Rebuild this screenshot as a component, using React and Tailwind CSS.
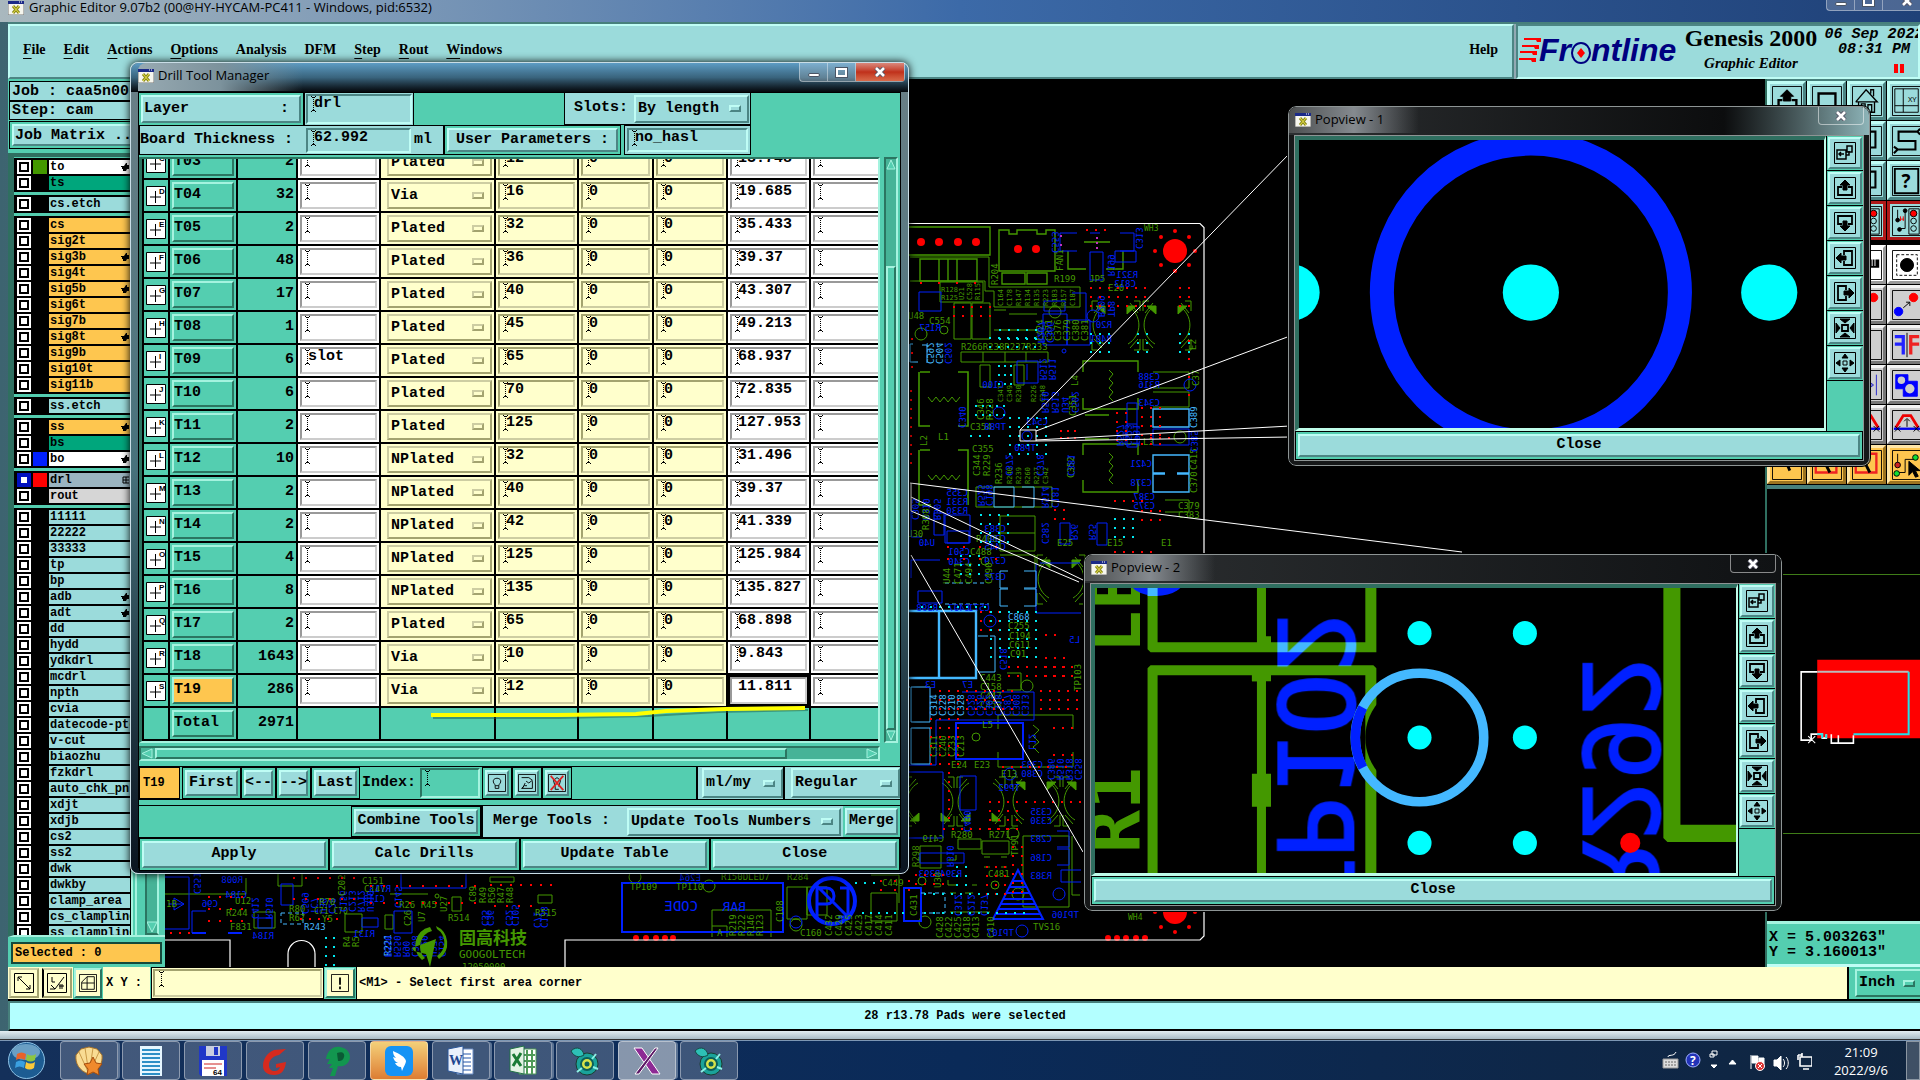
import React from 'react';
import clsx from 'clsx';

const MONO = "font-['Liberation_Mono','DejaVu_Sans_Mono',monospace] font-bold";
const SERIF = "font-['Liberation_Serif',serif] font-bold";
const UI = "font-['Open_Sans','Noto_Sans',sans-serif]";

const UP = 'border-2 border-t-[#bffdf5] border-l-[#bffdf5] border-b-[#4c8584] border-r-[#4c8584]';
const DOWN = 'border-2 border-t-[#4c8584] border-l-[#4c8584] border-b-[#bffdf5] border-r-[#bffdf5]';
const UP_GREEN = 'border-2 border-t-[#a5f3df] border-l-[#a5f3df] border-b-[#2b7561] border-r-[#2b7561]';
const UP_YELLOW = 'border-2 border-t-[#cdcda2] border-l-[#cdcda2] border-b-[#a3a36f] border-r-[#a3a36f]';

const TOOLS = [
  ['T03', 2, '', 'Plated', '12', '13.748', 'C'],
  ['T04', 32, '', 'Via', '16', '19.685', 'D'],
  ['T05', 2, '', 'Plated', '32', '35.433', 'E'],
  ['T06', 48, '', 'Plated', '36', '39.37', 'F'],
  ['T07', 17, '', 'Plated', '40', '43.307', 'G'],
  ['T08', 1, '', 'Plated', '45', '49.213', 'H'],
  ['T09', 6, 'slot', 'Plated', '65', '68.937', 'I'],
  ['T10', 6, '', 'Plated', '70', '72.835', 'J'],
  ['T11', 2, '', 'Plated', '125', '127.953', 'K'],
  ['T12', 10, '', 'NPlated', '32', '31.496', 'L'],
  ['T13', 2, '', 'NPlated', '40', '39.37', 'M'],
  ['T14', 2, '', 'NPlated', '42', '41.339', 'N'],
  ['T15', 4, '', 'NPlated', '125', '125.984', 'O'],
  ['T16', 8, '', 'NPlated', '135', '135.827', 'P'],
  ['T17', 2, '', 'Plated', '65', '68.898', 'Q'],
  ['T18', 1643, '', 'Via', '10', '9.843', 'R'],
  ['T19', 286, '', 'Via', '12', '11.811', 'S'],
];

const CYAN = 'bg-[#9bdbdb]';
const GOLD = 'bg-[#fec64f]';

const LAYER_GROUPS = [
  [
    { name: 'to', bg: 'bg-white', swatch: 'bg-[#449800]', hand: true },
    { name: 'ts', bg: 'bg-[#00a67c]' },
  ],
  [{ name: 'cs.etch', bg: CYAN }],
  [
    { name: 'cs', bg: GOLD },
    { name: 'sig2t', bg: GOLD },
    { name: 'sig3b', bg: GOLD, hand: true },
    { name: 'sig4t', bg: GOLD },
    { name: 'sig5b', bg: GOLD, hand: true },
    { name: 'sig6t', bg: GOLD },
    { name: 'sig7b', bg: GOLD },
    { name: 'sig8t', bg: GOLD, hand: true },
    { name: 'sig9b', bg: GOLD },
    { name: 'sig10t', bg: GOLD },
    { name: 'sig11b', bg: GOLD },
  ],
  [{ name: 'ss.etch', bg: CYAN }],
  [
    { name: 'ss', bg: GOLD, hand: true },
    { name: 'bs', bg: 'bg-[#00a67c]' },
    { name: 'bo', bg: 'bg-white', swatch: 'bg-[#0020ff]', hand: true },
  ],
  [
    { name: 'drl', bg: 'bg-[#9bb4c0]', swatch: 'bg-[#ff0000]', active: true },
    { name: 'rout', bg: 'bg-[#d6d6d6]' },
  ],
  [
    '11111', '22222', '33333', 'tp', 'bp', 'adb', 'adt', 'dd', 'hydd', 'ydkdrl', 'mcdrl', 'npth', 'cvia',
    'datecode-ptc', 'v-cut', 'biaozhu', 'fzkdrl', 'auto_chk_pnl', 'xdjt', 'xdjb', 'cs2', 'ss2', 'dwk',
    'dwkby', 'clamp_area', 'cs_clampline', 'ss_clampline',
  ].map((name) => ({ name, bg: CYAN, hand: name === 'adb' || name === 'adt' })),
];

// ---------------------------------------------------------------- small parts

const Caret = () => (
  <svg width="5" height="16" viewBox="0 0 5 16" className="-mr-[2px] shrink-0" stroke="#000" fill="none" shapeRendering="crispEdges">
    <path d="M2.5 1v14" strokeDasharray="1 1" />
    <path d="M0 .5h1M4 .5h1M1 1.5h3M0 15.5h1M4 15.5h1M1 14.5h3" />
  </svg>
);

const XIcon = () => (
  <svg width="16" height="14" viewBox="0 0 16 14" className="shrink-0">
    <path d="M0 0h16v14H0z" fill="#f6f6ee" stroke="#777" />
    <path d="M0 0h16v3H0z" fill="#1b2a88" />
    <path d="M11 1h1M13 1h1" stroke="#fff" />
    <path d="M5 5l6 7M11 5l-6 7" stroke="#8c8b1c" strokeWidth="3" />
    <path d="M5 5l6 7M11 5l-6 7" stroke="#e6e04a" />
  </svg>
);

const Knob = ({ yellow, green }) => (
  <span
    className={clsx(
      'pointer-events-none mr-[6px] h-[7px] w-3 shrink-0 self-center',
      yellow && UP_YELLOW,
      green && UP_GREEN,
      !yellow && !green && UP
    )}
  />
);

const Drop = ({ label, value, options, tone = UP, bg = CYAN, yellow, green, className }) => (
  <span className={clsx('flex items-center', tone, bg, className)}>
    <select
      aria-label={label}
      defaultValue={value}
      className={clsx(MONO, 'w-full min-w-0 appearance-none bg-transparent pl-[2px] text-[15px] leading-5 outline-none')}
    >
      {options.map((o) => (
        <option key={o}>{o}</option>
      ))}
    </select>
    <Knob yellow={yellow} green={green} />
  </span>
);

const Field = ({ label, value, tone = DOWN, className, caret = true }) => (
  <span className={clsx('flex min-w-0 items-start pl-[3px]', tone, className)}>
    {caret ? <Caret /> : <span className="w-[3px] shrink-0" />}
    <input
      aria-label={label}
      defaultValue={value}
      className={clsx(MONO, 'h-4 w-full min-w-0 bg-transparent text-[15px] leading-4 outline-none')}
    />
  </span>
);

const Key = ({ children, className, label }) => (
  <span className={clsx('flex border border-black bg-[#54ceb0] p-[2px]', className)}>
    <button type="button" aria-label={label} className={clsx(MONO, UP, CYAN, 'flex w-full items-center justify-center whitespace-nowrap text-[15px]')}>
      {children}
    </button>
  </span>
);

const CloseX = ({ className }) => (
  <button type="button" aria-label="Close window" className={clsx('flex items-center justify-center', className)}>
    <svg width="12" height="10" viewBox="0 0 12 10">
      <path d="M2 1l8 8M10 1l-8 8" stroke="#556" strokeWidth="4.5" />
      <path d="M2 1l8 8M10 1l-8 8" stroke="#fff" strokeWidth="2.6" />
    </svg>
  </button>
);

const WindowButtons = ({ red, className }) => (
  <div className={clsx('flex h-[19px] rounded-b border border-t-0 border-white/50', className)}>
    <button type="button" aria-label="Minimize" className="flex w-7 items-end justify-center border-r border-white/40 bg-white/20 pb-1">
      <span className="h-1 w-3 rounded-sm border border-gray-600 bg-white" />
    </button>
    <button type="button" aria-label="Maximize" className="flex w-7 items-center justify-center border-r border-white/40 bg-white/20">
      <span className="flex h-[9px] w-[11px] border-2 border-white outline outline-gray-600" />
    </button>
    <CloseX className={clsx('w-12', red ? 'bg-linear-to-b from-[#d9877b] via-[#c0301a] to-[#d86a4a]' : 'bg-white/20')} />
  </div>
);

// ---------------------------------------------------------------- header

const MENU = [
  ['F', 'ile'], ['E', 'dit'], ['A', 'ctions'], ['O', 'ptions'], ['', 'Analysis'], ['', 'DFM'], ['S', 'tep'], ['R', 'out'], ['W', 'indows'],
];

const Header = () => (
  <header className="flex h-[57px] shrink-0 border-t-2 border-[#47807c]">
    <nav className={clsx(SERIF, UP, CYAN, 'flex min-w-0 flex-1 items-center gap-[18px] pb-1 pl-[13px] text-sm')}>
      {MENU.map(([u, rest]) => (
        <a key={rest} href="#" className="leading-5">
          <span className="underline underline-offset-4">{u}</span>
          {rest}
        </a>
      ))}
      <a href="#" className="ml-auto pr-[14px] leading-5">Help</a>
    </nav>
    <div className={clsx(CYAN, DOWN, 'ml-[2px] flex w-[404px] shrink-0 overflow-hidden')}>
      <FrontlineLogo />
      <div className={clsx(SERIF, 'w-[138px] shrink-0 text-center')}>
        <p className="text-2xl leading-6 whitespace-nowrap">Genesis 2000</p>
        <p className="pt-[3px] text-[15px] leading-5 italic">Graphic Editor</p>
      </div>
      <div className={clsx(MONO, 'w-[108px] shrink-0 pt-px text-center text-[15px] leading-[15px] whitespace-nowrap italic')}>
        <p>06 Sep 2022</p>
        <p>08:31 PM</p>
        <p className="mt-[7px] flex justify-end gap-[2px] pr-[24px]">
          <span className="h-[9px] w-1 bg-[#f00]" />
          <span className="h-[9px] w-1 bg-[#f00]" />
        </p>
      </div>
    </div>
  </header>
);

const FrontlineLogo = () => (
  <svg width="164" height="52" viewBox="0 0 164 52" className="shrink-0">
    <g fill="#f00">
      <path d="M6 12h17v4h-4l-1-2H6zM4 19h17v4h-4l-1-2H4zM2 25h17v4h-4l-1-2H2zM1 32h17v4h-4l-1-2H1z" />
    </g>
    <g className="font-['Liberation_Sans',sans-serif]" fontSize="32" fontWeight="bold" fontStyle="italic" fill="#000080">
      <text x="21" y="35">Fr</text>
      <text x="73" y="35">ntline</text>
    </g>
    <ellipse cx="63" cy="27" rx="9" ry="10" fill="none" stroke="#000080" strokeWidth="2" />
    <path d="M63 22l4 5-4 5-4-5z" fill="#f00" />
  </svg>
);

// ---------------------------------------------------------------- sidebar

const RowMark = ({ hand }) => (
  <svg width="8" height="8" viewBox="0 0 8 8" className="absolute top-1 left-[106px]">
    {hand ? <path d="M0 3h3l2-3h1v2h2v4H6L5 8H2V6H1V4H0z" fill="#000" /> : <path d="M2 1h7v6H2zM2 4h7M5 1v6" fill="none" stroke="#000" />}
  </svg>
);

const LayerRow = ({ layer }) => (
  <label className="relative flex h-4 items-center">
    <span className={clsx('ml-[2px] flex h-[14px] w-[14px] items-center justify-center', layer.active ? 'bg-[#0010c0]' : 'bg-white')}>
      <input
        type="checkbox"
        defaultChecked={layer.active}
        className={clsx('h-[10px] w-[10px] appearance-none border-2 bg-white', layer.active ? 'border-[#0010c0]' : 'border-black')}
      />
    </span>
    <span className={clsx('ml-[2px] h-[14px] w-[14px]', layer.swatch || 'bg-black')} />
    <span className={clsx(MONO, layer.bg, 'ml-[2px] h-[14px] min-w-0 flex-1 overflow-hidden pl-px text-xs leading-[14px] whitespace-nowrap')}>
      {layer.name}
    </span>
    {(layer.hand || layer.active) && <RowMark hand={layer.hand} />}
  </label>
);

const Sidebar = () => (
  <aside className={clsx(MONO, 'flex w-[157px] shrink-0 flex-col bg-[#54ceb0] pt-[2px]')}>
    <p className={clsx(CYAN, 'ml-px h-5 overflow-hidden border border-black pl-[2px] text-[15px] leading-[19px] whitespace-nowrap')}>Job : caa5n00</p>
    <p className={clsx(CYAN, 'ml-px h-[19px] border border-black pl-[2px] text-[15px] leading-[18px]')}>Step: cam</p>
    <div className="mt-px ml-px flex h-7 border border-black p-[2px]">
      <button type="button" className={clsx(UP, CYAN, 'flex-1 pl-px text-left text-[15px] leading-5')}>Job Matrix ...</button>
    </div>
    <div className="mt-1 flex min-h-0 flex-1 border-t-4 border-l-[6px] border-b-2 border-t-[#2f6f60] border-l-[#2f6f60] border-b-[#a5f3df]">
      <div className="flex w-[117px] flex-col gap-[5px] overflow-hidden pt-[2px] pl-px">
        {LAYER_GROUPS.map((group, i) => (
          <div key={i} className="bg-black pr-px outline outline-black">
            {group.map((layer) => (
              <LayerRow key={layer.name} layer={layer} />
            ))}
          </div>
        ))}
      </div>
      <div className="w-[6px] border-x-2 border-x-[#a5f3df] bg-[#54ceb0]" />
      <div className="ml-2 flex w-[14px] flex-col justify-end border-2 border-[#2b7561] border-r-[#a5f3df] bg-[#46b397]">
        <svg width="10" height="12" viewBox="0 0 10 12">
          <path d="M0 1h10L5 11z" fill="#54ceb0" stroke="#a5f3df" />
        </svg>
      </div>
    </div>
    <p className="mx-[3px] mt-[5px] mb-[3px] h-[22px] border-2 border-[#14483a] bg-[#fec64f] pl-[2px] text-xs leading-[18px]">Selected : 0</p>
  </aside>
);

// ---------------------------------------------------------------- board drawing

const G = '#449800';
const B = '#0020ff';
const L = '#44b8ff';
const R = '#f00';
const C = '#00e8f0';

const Tx = ({ x, y, t, c = G, m = 'h', s = 9 }) => {
  const matrix = {
    h: `translate(${x} ${y})`,
    v: `translate(${x} ${y}) rotate(-90)`,
    mh: `matrix(-1 0 0 1 ${x} ${y})`,
    mv: `matrix(0 -1 -1 0 ${x} ${y})`,
  }[m];
  return (
    <text transform={matrix} fill={c} fontSize={s}>
      {t}
    </text>
  );
};

const Dots = ({ x, y, nx = 1, ny = 1, dx = 9, dy = 9, c = R }) => (
  <path
    d={Array.from({ length: nx * ny }, (_, i) => `M${x + (i % nx) * dx} ${y + Math.floor(i / nx) * dy}h2v2h-2z`).join('')}
    fill={c}
  />
);

// a run of upright references, evenly spaced from left to right
const Run = ({ x, y, list, dx = 9, c = G, m = 'v', s = 9 }) =>
  list.split(' ').map((t, i) => <Tx key={i} x={x + i * dx} y={y} t={t} c={c} m={m} s={s} />);

const BigCap = ({ x, y, flip }) => (
  <g transform={flip ? `matrix(1 0 0 -1 ${x} ${y + 49})` : `translate(${x} ${y})`} stroke={G} fill="none">
    <path d="M6 0H0v10M42 0h6v10M0 38v11h6M48 38v11h-6M2 12l8-10M38 2l8 10M10 47l-8-9M46 38l-8 9" />
    <path d="M12 5a22 22 0 0 0 0 38M36 5a22 22 0 0 1 0 38" />
    <path d="M4 5h9v8zM44 5h-9v8z" fill={G} />
  </g>
);

const BoardCanvas = () => (
  <svg
    viewBox="165 79 1600 888"
    preserveAspectRatio="xMinYMin slice"
    className="h-full min-w-0 flex-1 bg-black font-['DejaVu_Sans_Mono',monospace]"
  >
    {/* green silkscreen */}
    <g fill="none" stroke={G}>
      <path d="M900 227h90v28h-90M999 230h10v4h8v-4h20v4h9v-4h9v41h-56zM920 259h57v22h-57zM939 259v22M948 259v22M957 259v22M1002 273h23v11h-23zM1027 273h20v11h-20z" strokeWidth="1.4" />
      <path d="M910 257h79v30h91v20h-86v-16h-9v-10h-75M940 282h43v20h-43zM954 303h17v36h-17zM972 303h18v36h-18zM994 310h12M1009 314h28M994 330h44" />
      <path d="M961 352h87v10h-87zM983 352v10M1005 352v10M1026 352v10M980 365h10v22h-10zM1014 365h10v20h-10z" />
      <path d="M920 372h10M958 372h10v54h-10M930 426h-11v-54M920 450h10M958 450h10v55M919 450v55h12" strokeWidth="1.6" />
      <path d="M928 397l4 5 4-5 4 5 4-5 4 5 4-5 4 5 4-5M928 475l4 5 4-5 4 5 4-5 4 5 4-5 4 5 4-5" />
      <path d="M1083 372v-11h55v11M1083 398v11h55v-11M1083 455v-11h55v11M1083 480v12h55v-12M1085 415h24M1085 439h24" strokeWidth="1.4" />
      <path d="M1109 370l4 4-4 5 4 4-4 5 4 4-4 5 4 4M1109 453l4 4-4 5 4 4-4 5 4 4-4 5 4 4" />
      <path d="M1153 372h36v16h-36M1153 392h36v15h-36M1165 500h24v12h-24M976 487h76v20h-76zM1000 516h35v35h-35zM1000 533h35M1000 555h35v16" />
      <path d="M1068 251v18h18M1106 269h17v-18M1084 242h26" strokeWidth="1.4" />
      <circle cx="921" cy="334" r="6" /><circle cx="944" cy="330" r="4" /><circle cx="1055" cy="312" r="6" /><circle cx="1180" cy="437" r="6" /><circle cx="985" cy="561" r="4" />
      <circle cx="1027" cy="686" r="6" /><circle cx="976" cy="737" r="4" /><circle cx="1013" cy="834" r="6" /><circle cx="922" cy="881" r="4" /><circle cx="995" cy="885" r="4" /><circle cx="925" cy="922" r="6" /><circle cx="1018" cy="894" r="6" />
      <path d="M998 729v-14h75v14M998 752v15h75v-15M1033 725l6 5-6 6 6 6-6 5 6 6M958 839h23v10h-23zM982 841h27v13h-27zM1023 836h46v71h-46zM1072 836v59h8M920 846h21v22h-21zM1007 673h14v17h-14" />
      <path d="M984 857h6M1001 857h6M984 867h6M1001 867h6M948 860h8v-5M948 880v5h8M977 885h-5M950 893h6M965 893h8M950 912h40" />
      <path d="M712 937v-27h59v27M712 926h15v11M787 887h20v32h-20zM807 887h20v28h-20zM871 893h26v28h-26zM871 875h28v28M538 895h14v8h-14zM162 894h84v-16" />
      <path d="M254 912h21v16h-21zM278 872h24v14h-24zM345 914h17v18h-17zM452 897h9v14h-9zM385 915h8v14h-8zM390 894h38M490 877h24v5h-24z" />
      <circle cx="635" cy="877" r="6" /><circle cx="709" cy="886" r="6" /><circle cx="796" cy="925" r="6" /><circle cx="437" cy="896" r="2" />
    </g>
    <BigCap x={1092} y={301} />
    <BigCap x={1143} y={301} />
    <BigCap x={906} y={777} flip />
    <BigCap x={957} y={777} flip />
    <BigCap x={1012} y={777} />
    <BigCap x={1063} y={777} />
    <BigCap x={1037} y={555} />

    {/* blue silkscreen */}
    <g fill="none" stroke={B}>
      <path d="M1060 233h17M1090 233h10M1120 233h14v18h-14M1077 251h-17v-18M1090 252h13v28h-13zM1115 251h21v11h-21zM919 292h22v19h-22zM1043 314h24v31h-24zM1044 301h21v10h-21zM1067 320h23v25h-23zM1072 293h14v30" />
      <path d="M1017 361h21v22h-21zM1027 364v16M1127 403h10v44h-10zM1127 424h10M1153 429h36v16h-36zM1060 523h10v21h-10zM1097 523h10v22h-10zM934 513h10v22h-10zM945 515h25v28h-25zM947 531h22v12h-22z" />
      <path d="M911 511v26h11M918 591h24v12h-24zM940 560h-29v18M1036 563v50h45M1040 563h40M962 692h72v28h-98v45h-34M960 776h16v34h-16zM903 772h40v66h-44M920 853h44v10h-44zM1057 831h12v16h-12M1057 849h12v16h-12M1081 870h-20v12h20" />
      <path d="M956 723h67v36h-67zM904 888h17v33h-17zM622 883h161v49H622z" strokeWidth="2" />
      <circle cx="1093" cy="316" r="6" /><circle cx="999" cy="413" r="6" /><circle cx="990" cy="621" r="6" /><circle cx="1010" cy="774" r="6" /><circle cx="1059" cy="894" r="6" /><circle cx="1022" cy="931" r="6" /><circle cx="1190" cy="385" r="6" /><circle cx="1027" cy="436" r="5" /><circle cx="1064" cy="351" r="2" /><circle cx="796" cy="922" r="6" />
      <path d="M165 877h24v52h-24M192 911v22h13M206 911h-14M281 884h12v21h-12zM401 872h65v16h-65zM362 918h16v9h-16zM394 911h18v22h-18zM258 918h14v10h-14zM174 898l10 6-10 6zM168 904h16" />
      <path d="M192 933h14M228 933h14" strokeWidth="2" />
      <circle cx="832" cy="901" r="23" strokeWidth="4" />
      <path d="M816 885l34 34M817 919v-31h10a7 8 0 0 1 0 16h-9M850 888h-10M838 917h10v-30" strokeWidth="3" />
      <path d="M1018 870l-25 49h50zM1013 881h10M1010 887h16M1007 893h22M1004 899h28M1001 904h34M998 909h40M995 914h46" strokeWidth="2" />
    </g>

    {/* overlap of both sides */}
    <g fill="none" stroke={L}>
      <path d="M1165 409h-12v18h12M1177 409h12v18h-12M1165 455h-12v18h12M1177 455h12v18h-12M1165 474h-12v18h12M1177 474h12v18h-12M1165 409h12M1165 427h12M1165 455h12M1165 492h12" strokeWidth="1.4" />
      <path d="M994 487h20v20h-20zM1022 487h12v20h-12M1008 571h-8v17h8M1024 571h12v17h-12M1008 589h-8v17h8M1024 589h12v17h-12M913 344h-3v18h8M922 345h5v18M910 687h-2M911 687h19v35h-19zM911 728h19v36h-19zM990 636h5v36h-17M978 636h10" />
      <path d="M900 611h76v67h-76M939 611v67" strokeWidth="2.4" />
      <path d="M921 893h24v20h-24M945 583h40M945 604h44M281 913h22v11h-22z" strokeDasharray="4 3" />
    </g>

    {/* reference labels */}
    <Tx x="1144" y="231" t="WH3" s={8} />
    <Tx x="1054" y="282" t="R199" />
    <Tx x="1089" y="282" t="JP5" />
    <Tx x="1108" y="291" t="E20" />
    <Tx x="998" y="285" t="R204" m="v" />
    <Tx x="1063" y="271" t="FAN1" m="v" />
    <Run x={941} y={292} dx={0} list="R128" m="h" s={7} />
    <Run x={941} y={300} dx={0} list="R125" m="h" s={7} />
    <Run x={964} y={300} dx={8} list="U21 C528 R115" s={7} />
    <Run x={1003} y={306} list="C164 C178 R147 R134 R135 R223 R183 R157 C187" s={7} />
    <Run x={1043} y={341} list="C424 C371 C376 C379 C380 C381" />
    <Run x={1038} y={343} dx={9} list="R207 C366" c={B} m="mv" />
    <Tx x="908" y="319" t="U48" />
    <Tx x="929" y="324" t="C554" />
    <Tx x="941" y="331" t="R157" c={B} m="mh" />
    <Run x={927} y={364} dx={9} list="C592 C504" c={L} m="mv" />
    <Tx x="945" y="364" t="C502" c={B} m="mv" />
    <Tx x="961" y="350" t="R266R238R237R233" />
    <Run x={984} y={420} dx={9} list="C346 R228" />
    <Run x={1003} y={402} dx={9} list="C347 C349 R230" s={7} />
    <Run x={1036} y={402} dx={9} list="R226 C348" s={7} />
    <Run x={1040} y={380} dx={9} list="R512 R511" c={B} m="mv" />
    <Run x={1042} y={413} dx={10} list="R510 R513 U34 C502" c={B} m="mv" />
    <Tx x="1078" y="386" t="L4" m="v" />
    <Tx x="1076" y="416" t="C351" m="v" />
    <Tx x="1074" y="478" t="C352" m="v" />
    <Tx x="1196" y="350" t="E2" m="v" />
    <Tx x="1199" y="386" t="C37" m="v" />
    <Tx x="1160" y="380" t="C388" c={B} m="mh" />
    <Tx x="1160" y="388" t="R316" c={B} m="mh" />
    <Tx x="1160" y="406" t="C343" c={B} m="mh" />
    <Tx x="1197" y="428" t="C389" c={L} m="v" />
    <Tx x="1197" y="470" t="C415" m="v" />
    <Tx x="1197" y="493" t="C370" m="v" />
    <Tx x="1191" y="452" t="C385" c={B} m="mv" />
    <Tx x="1143" y="445" t="L3" />
    <Tx x="1152" y="467" t="C421" c={B} m="mh" />
    <Tx x="1152" y="486" t="C378" c={B} m="mh" />
    <Tx x="1155" y="500" t="C387" c={B} m="mh" />
    <Tx x="1155" y="509" t="C375" c={B} m="mh" />
    <Tx x="1178" y="509" t="C379" />
    <Tx x="1178" y="518" t="C383" />
    <Tx x="1138" y="278" t="R321" c={B} m="mh" />
    <Tx x="1136" y="287" t="C813" c={B} m="mh" />
    <Tx x="1136" y="249" t="C313" c={B} m="mv" />
    <Tx x="1108" y="276" t="R199" c={B} m="mv" />
    <Tx x="1112" y="328" t="R20" c={B} m="mh" />
    <Tx x="1112" y="342" t="R401" c={B} m="mh" />
    <Run x={1098} y={317} dx={10} list="R209 TP8" c={B} m="mv" />
    <Tx x="1052" y="253" t="C553" c={B} m="mv" />
    <Run x={1117} y={446} dx={8} list="R527 C523 TP31" c={B} m="mv" />
    <Tx x="1004" y="388" t="C100" c={B} m="mh" />
    <Tx x="959" y="428" t="C340" c={B} m="mv" />
    <Tx x="970" y="430" t="C354" />
    <Tx x="1006" y="430" t="TP88" c={B} m="mh" />
    <Tx x="1036" y="451" t="TP80" c={B} m="mh" />
    <Tx x="1048" y="425" t="C543" c={B} m="mh" />
    <Tx x="938" y="440" t="L1" />
    <Tx x="927" y="446" t="L2" m="v" />
    <Tx x="972" y="452" t="C355" />
    <Run x={980} y={476} dx={10} list="C344 R229" />
    <Tx x="1002" y="484" t="R236" m="v" />
    <Run x={1012} y={484} list="R240 R239 R260 R227 C342" s={7} />
    <Run x={1006} y={476} dx={31} list="C372 C378 C381" c={B} m="mv" />
    <Run x={978} y={506} dx={8} list="R525 C198" c={B} m="mv" />
    <Run x={1042} y={508} dx={10} list="R514 C181" c={B} m="mv" />
    <Run x={912} y={520} dx={11} list="C305 R310 R305" c={B} m="mv" />
    <Tx x="968" y="496" t="C355" c={B} m="mh" />
    <Tx x="968" y="505" t="R331" c={B} m="mh" />
    <Tx x="968" y="514" t="R330" c={B} m="mh" />
    <Tx x="929" y="530" t="R308" m="v" />
    <Tx x="907" y="537" t="U30" />
    <Tx x="935" y="546" t="U40" c={B} m="mh" />
    <Tx x="976" y="542" t="R408" />
    <Tx x="1006" y="532" t="C383" c={B} m="mh" />
    <Tx x="1006" y="542" t="C391" c={B} m="mh" />
    <Tx x="1006" y="550" t="C445" c={B} m="mh" />
    <Tx x="1006" y="564" t="C379" c={B} m="mh" />
    <Tx x="1006" y="580" t="C372" c={B} m="mh" />
    <Tx x="970" y="555" t="C488" />
    <Tx x="970" y="565" t="C340" c={B} m="mh" />
    <Tx x="970" y="555" t="C501" c={B} m="mh" />
    <Tx x="1042" y="544" t="C582" c={B} m="mv" />
    <Run x={1071} y={540} dx={18} list="R26 R55" c={B} m="mv" />
    <Tx x="1057" y="546" t="E25" />
    <Tx x="1107" y="546" t="E15" />
    <Tx x="1161" y="546" t="E1" />
    <Run x={950} y={584} dx={11} list="U44 C471 C494" />
    <Tx x="992" y="584" t="C490" m="v" />
    <Tx x="990" y="611" t="C571" c={B} m="mh" />
    <Tx x="938" y="611" t="R398" c={B} m="mh" />
    <Tx x="970" y="611" t="C407" c={B} m="mh" />
    <Tx x="1008" y="620" t="C868" c={L} />
    <Tx x="1008" y="629" t="C255" />
    <Tx x="1009" y="639" t="C194" />
    <Tx x="1009" y="648" t="C611" />
    <Tx x="1010" y="657" t="C91" />
    <Tx x="1000" y="670" t="C518" c={B} m="mv" />
    <Tx x="980" y="681" t="C443" />
    <Tx x="980" y="690" t="C158" />
    <Tx x="980" y="699" t="C447" />
    <Tx x="980" y="708" t="C453" />
    <Tx x="936" y="688" t="E3" c={B} m="mh" />
    <Tx x="973" y="688" t="E7" c={B} m="mh" />
    <Run x={937} y={716} list="C314 C228 C210 C328" c={L} />
    <Run x={968} y={716} list="C528 C326 C302 C318 C287 C308 C313" c={B} m="mv" />
    <Run x={937} y={757} list="C311 C240 C233 C213" />
    <Tx x="982" y="728" t="L5" />
    <Tx x="1029" y="750" t="L12" c={B} m="mv" />
    <Tx x="951" y="768" t="E24" />
    <Tx x="974" y="768" t="E23" />
    <Tx x="1001" y="777" t="E13" />
    <Tx x="1043" y="768" t="C383" c={B} m="mh" />
    <Tx x="1043" y="777" t="C380" c={B} m="mh" />
    <Run x={1048} y={780} list="C386 R510 R318 C558" c={B} m="mv" />
    <Tx x="1020" y="791" t="TP92" c={B} m="mh" />
    <Tx x="1081" y="691" t="TP103" m="v" />
    <Tx x="1080" y="643" t="L5" c={B} m="mh" />
    <Tx x="1052" y="815" t="C335" c={B} m="mh" />
    <Tx x="1052" y="824" t="C330" c={B} m="mh" />
    <Tx x="1052" y="842" t="C283" c={B} m="mh" />
    <Tx x="1052" y="861" t="C186" c={B} m="mh" />
    <Tx x="1052" y="879" t="R383" c={B} m="mh" />
    <Tx x="951" y="838" t="R280" />
    <Tx x="989" y="838" t="R271" />
    <Tx x="944" y="842" t="C419" m="mh" />
    <Tx x="919" y="867" t="R298" m="v" />
    <Tx x="947" y="867" t="R310" c={B} m="mv" />
    <Tx x="1018" y="856" t="TP91" m="v" />
    <Tx x="964" y="832" t="C430" c={B} m="mv" />
    <Tx x="962" y="877" t="R394R393" c={B} m="mh" />
    <Tx x="941" y="888" t="U30" m="v" />
    <Tx x="988" y="877" t="C481" />
    <Tx x="917" y="916" t="C431" m="v" />
    <Run x={955} y={916} dx={13} list="C312 C212 C137" c={B} m="mv" />
    <Run x={943} y={938} list="C428 C422 C425 C418 C413" />
    <Tx x="994" y="938" t="C410" m="v" />
    <Tx x="1079" y="918" t="TP106" c={B} m="mh" />
    <Tx x="1014" y="936" t="TP107" c={B} m="mh" />
    <Tx x="1033" y="930" t="TVS16" />
    <Tx x="1128" y="920" t="WH4" s={8} />
    <Tx x="630" y="890" t="TP109" />
    <Tx x="676" y="890" t="TP110" />
    <Tx x="701" y="881" t="E264" c={B} m="mh" />
    <Tx x="721" y="880" t="R150DLED7" />
    <Tx x="787" y="880" t="R284" />
    <Tx x="882" y="886" t="C449" />
    <Tx x="746" y="911" t="BAR" c={B} m="mh" s={13} />
    <Tx x="698" y="911" t="CODE" c={B} m="mh" s={14} />
    <Run x={736} y={936} list="R219 R222 R146 R123" />
    <Tx x="717" y="936" t="A" />
    <Tx x="783" y="922" t="C108" m="v" />
    <Tx x="800" y="936" t="C160" />
    <Run x={832} y={936} dx={10} list="C432 C429 C425 C423 C417 C414 C411" />
    <Run x={486} y={903} list="R49 R50 R47 R48" />
    <Run x={482} y={926} dx={5} list="C35 C36" c={B} m="mv" />
    <Run x={506} y={926} dx={6} list="C52 C105" c={B} m="mv" />
    <Run x={534} y={928} dx={7} list="C71 C138" c={B} m="mv" />
    <Tx x="535" y="916" t="R515" />
    <Tx x="226" y="916" t="R244" />
    <Tx x="235" y="904" t="U12" />
    <Tx x="230" y="930" t="F831" />
    <Tx x="218" y="907" t="C96" c={B} m="mh" />
    <Tx x="243" y="883" t="R008" c={B} m="mh" />
    <Tx x="247" y="898" t="C184" c={B} m="mh" />
    <Tx x="274" y="939" t="R184" c={B} m="mh" />
    <Tx x="194" y="894" t="C551" c={B} m="mv" />
    <Run x={252} y={919} dx={14} list="C412 R510" c={B} m="mv" />
    <Tx x="289" y="912" t="R80" />
    <Tx x="289" y="921" t="R67" />
    <Tx x="304" y="930" t="R243" c={L} />
    <Run x={302} y={914} dx={9} list="C509 TC7 U30 C28" c={B} m="mv" />
    <Tx x="319" y="905" t="R70" />
    <Tx x="314" y="914" t="C71 C70" s={8} />
    <Tx x="322" y="922" t="Y5" />
    <Run x={340} y={912} dx={9} list="C156 C213 R712 U310" c={B} m="mv" />
    <Run x={345} y={896} dx={8} list="C202" />
    <Tx x="362" y="884" t="C151" />
    <Tx x="364" y="892" t="C147" />
    <Tx x="391" y="892" t="R713" c={B} m="mh" />
    <Tx x="385" y="902" t="C113" c={B} m="mh" />
    <Tx x="375" y="937" t="R131" c={B} m="mh" />
    <Run x={350} y={947} list="R4 R5" />
    <Tx x="399" y="908" t="R26 R45" />
    <Tx x="411" y="926" t="C26" m="v" />
    <Tx x="425" y="922" t="U7" m="v" />
    <Tx x="447" y="912" t="U27" m="v" />
    <Tx x="448" y="921" t="R514" />
    <Tx x="391" y="956" t="R221" c={L} m="v" />
    <Run x={385} y={957} dx={9} list="R550 R550 R90 C308 C320 U27 C154" c={B} m="mv" />
    <Tx x="395" y="908" t="C145" c={B} m="mv" />
    <Tx x="476" y="902" t="C89" m="v" />
    <Tx x="166" y="907" t="1B" />

    {/* maker mark */}
    <path d="M430 927a19 19 0 0 0 -8 33l3-2a16 16 0 0 1 7-27zM436 926a19 19 0 0 1 3 33l-2-3a16 16 0 0 0 0-27zM412 948l24-9-6 28-4-13-12-3z" fill={G} />
    <text x="459" y="944" fontSize="17" fontWeight="bold" fill={G} fontFamily="'Noto Sans CJK SC', sans-serif">固高科技</text>
    <Tx x="459" y="958" t="GOOGOLTECH" s={11} />
    <Tx x="462" y="970" t="12050000" s={9} />

    {/* drills */}
    <g fill={R}>
      {[921, 939, 958, 976].map((x) => <circle key={x} cx={x} cy="242" r="4" />)}
      <circle cx="1018" cy="249" r="4" /><circle cx="1036" cy="249" r="4" />
      <circle cx="1175" cy="251" r="12" /><circle cx="1175" cy="912" r="12" />
      {[[1175, 231], [1161, 237], [1189, 237], [1155, 251], [1195, 251], [1161, 265], [1189, 265], [1175, 271], [1155, 912], [1195, 912], [1161, 927], [1189, 927], [1175, 932]].map(([x, y]) => (
        <circle key={`${x}-${y}`} cx={x} cy={y} r="2" />
      ))}
      {[636, 646, 656, 665, 673, 1108, 1117, 1126, 1136, 1145].map((x) => <circle key={x} cx={x} cy="938" r="3" />)}
    </g>
    <Dots x={1086} y={229} nx={3} />
    <Dots x={1090} y={287} nx={7} ny={3} />
    <Dots x={1179} y={287} nx={2} ny={3} />
    <Dots x={910} y={390} nx={1} ny={9} />
    <Dots x={911} y={338} nx={1} ny={3} dy={14} />
    <Dots x={1060} y={430} nx={3} ny={2} dx={7} dy={7} />
    <Dots x={1141} y={407} nx={3} ny={5} />
    <Dots x={1116} y={412} nx={2} ny={4} />
    <Dots x={1141} y={510} nx={3} ny={2} />
    <Dots x={1114} y={500} nx={4} />
    <Dots x={1114} y={551} nx={5} />
    <Dots x={1054} y={509} nx={2} ny={2} />
    <Dots x={980} y={611} nx={3} ny={3} />
    <Dots x={1045} y={634} nx={2} />
    <Dots x={1045} y={657} nx={3} ny={3} />
    <Dots x={1008} y={666} nx={8} ny={2} />
    <Dots x={1040} y={690} nx={5} ny={3} />
    <Dots x={939} y={690} nx={9} ny={3} />
    <Dots x={930} y={718} nx={4} ny={6} />
    <Dots x={1053} y={727} nx={3} ny={2} dy={27} />
    <Dots x={948} y={772} nx={1} ny={6} />
    <Dots x={1002} y={766} nx={8} />
    <Dots x={989} y={801} nx={11} />
    <Dots x={989} y={810} nx={4} ny={3} />
    <Dots x={943} y={828} nx={8} />
    <Dots x={1012} y={846} nx={2} ny={6} />
    <Dots x={915} y={874} nx={4} ny={2} />
    <Dots x={986} y={866} nx={3} ny={4} />
    <Dots x={920} y={282} nx={4} dx={18} />
    <Dots x={953} y={306} nx={5} ny={2} />
    <Dots x={1150} y={437} nx={3} />
    <Dots x={1188} y={340} nx={1} ny={4} dy={18} />
    <Dots x={947} y={546} nx={4} ny={2} dx={16} dy={12} />
    <Dots x={170} y={932} nx={3} />
    <Dots x={208} y={896} nx={4} ny={3} dx={11} dy={12} />
    <Dots x={293} y={877} nx={6} ny={2} dx={12} dy={21} />
    <Dots x={370} y={885} nx={9} ny={2} dx={13} dy={17} />
    <Dots x={300} y={918} nx={5} dx={9} />
    <Dots x={490} y={884} nx={7} dx={10} />
    <Dots x={494} y={905} nx={4} dx={12} dy={9} />
    <Dots x={880} y={880} nx={3} ny={2} dx={14} />
    <g>
      <Dots x={999} y={329} nx={5} ny={2} c={C} />
      <Dots x={989} y={337} nx={6} ny={2} c={C} />
      <Dots x={1090} y={333} nx={3} ny={3} c={C} dy={9} />
      <Dots x={1137} y={333} nx={2} ny={3} c={C} />
      <Dots x={1179} y={333} nx={2} ny={3} c={C} />
      <Dots x={1009} y={417} nx={5} ny={5} c={C} />
      <Dots x={970} y={435} nx={3} c={C} />
      <Dots x={975} y={405} nx={5} ny={2} c={C} dx={7} />
      <Dots x={998} y={365} nx={3} ny={3} c={C} dx={6} />
      <Dots x={1114} y={518} nx={3} ny={3} c={C} />
      <Dots x={980} y={514} nx={4} ny={4} c={C} />
      <Dots x={1008} y={611} nx={4} ny={6} c={C} />
      <Dots x={990} y={611} nx={2} ny={6} c={C} />
      <Dots x={921} y={606} nx={8} c={C} />
      <Dots x={960} y={555} nx={3} ny={3} c={C} />
      <Dots x={924} y={893} nx={9} c={C} />
      <Dots x={924} y={912} nx={12} c={C} />
      <Dots x={862} y={912} nx={6} c={C} dx={8} />
      <Dots x={956} y={866} nx={2} ny={3} c={C} />
      <Dots x={325} y={937} nx={2} ny={4} c={C} dx={8} />
      <Dots x={855} y={882} nx={3} c={C} dx={9} />
      <Dots x={1096} y={237} ny={3} c="#c030c0" dy={5} />
      <Dots x={1060} y={235} ny={2} c="#c030c0" />
    </g>

    {/* outline and zoom rays */}
    <path d="M900 223.500H1200l4 4V936l-4 4H565v30M165 940h65v30M288 970v-16a13.500 13.500 0 0 1 27 0v16" fill="none" stroke="#fff" strokeWidth="1.200" />
    <path d="M1020 430h16v11h-16zM1020 430L1290 153M1036 431L1290 336M1036 440L1290 426M1036 441L1290 437M910 483L1462 552M911 497L1083 580M911 511L1079 582M911 555L1083 852M911 483v28" fill="none" stroke="#fff" />
  </svg>
);

// ---------------------------------------------------------------- right column

const ToolIcon = ({ kind }) => {
  const art = {
    up: <><path d="M11 15H7v17M21 15h5v17" strokeWidth="2.500" /><path d="M16 4l7 7h-3v5h-8v-5H9z" fill="#000" /></>,
    down: <><path d="M7 23V8h18v15" strokeWidth="2.500" /><path d="M11 21h9l-4 6z" fill="#000" /></>,
    home: <path d="M4 17L15 4l12 13H4M7 17v11h17V17M20 8V4h3v7M10 19h4v4h-4zM17 28v-8h4v8" strokeWidth="1.400" />,
    xy: <><path d="M3 3h25v25H3zM12 3v25M3 21h25" /><text x="17" y="17" fontSize="8" fill="#000" stroke="none">XY</text></>,
    snake: <path d="M27 6H7v10h18v9H6M27 6l3-3M27 6l3 3M6 25l-4-3M6 25l-4 4" strokeWidth="2.200" />,
    screen: <path d="M3 6h22v17H3zM8 23v4h12" strokeWidth="2.200" />,
    help: <><path d="M3 3h25v26H3z" strokeWidth="2" /><text x="10" y="23" fontSize="20" fontWeight="bold" fill="#000" stroke="none">?</text></>,
    lights: (
      <>
        <path d="M18 3h11v27H18zM14 6v18H8M6 4v12" />
        <circle cx="23" cy="8" r="3.500" fill="#f00" /><circle cx="23" cy="16" r="3" /><circle cx="23" cy="24" r="3" />
        <circle cx="14" cy="5" r="2" fill="#000" /><circle cx="6" cy="15" r="2" fill="#000" /><circle cx="8" cy="25" r="2" fill="#000" />
        <path d="M9 14h4M9 11v5M12 11v5" stroke="#e00" />
      </>
    ),
    pad: <><path d="M5 5h22v22H5z" strokeDasharray="3 2" /><circle cx="16" cy="16" r="7" fill="#000" /></>,
    comb: <path d="M4 4v24M20 10v8h8v-8M23 10v8M26 10v8" strokeWidth="2" />,
    move: <><circle cx="7" cy="23" r="4.500" fill="#00f" stroke="#00f" /><circle cx="23" cy="8" r="4.500" fill="#f00" stroke="#f00" /><path d="M12 19l7-6M15 13h4v4" /></>,
    mirror: <><path d="M3 7h9v19M3 15h9" stroke="#22f" strokeWidth="3.500" /><path d="M29 7h-9v19M29 15h-9" stroke="#e22" strokeWidth="3.500" /><path d="M16 3v26" /></>,
    copy: <><path d="M4 5h13v7h10v16H12v-8H4z" fill="#00f" stroke="#00f" /><circle cx="10" cy="11" r="4" fill="#ccc" stroke="none" /><circle cx="19" cy="20" r="5" fill="#ccc" stroke="none" /></>,
    arrow: <path d="M14 16h8M19 13l4 3-4 3M26 5v22" stroke="#22c" />,
    stretch: <><path d="M4 19L12 6h8l8 13" stroke="#e00" strokeWidth="3" /><path d="M2 20h28" stroke="#00e" strokeWidth="2.500" /><path d="M16 18v-8M13 12l3-3 3 3M3 17l6 6M9 17l-6 6M23 17l6 6M29 17l-6 6" /></>,
    route: <><path d="M6 4v12M6 24h8V10h11" /><circle cx="6" cy="16" r="3" fill="#c22" /><circle cx="25" cy="8" r="3" fill="#1d3" /><circle cx="5" cy="25" r="3" fill="#1d3" /><path d="M18 12v15l4-4 3 6 3-1-3-6h5z" fill="#000" /></>,
    pick: <><path d="M4 4h22v20H4z" stroke="#e22" strokeWidth="2.500" /><path d="M14 14l5 10" strokeWidth="3" /></>,
    pointer: <path d="M14 10l5 12" strokeWidth="3" />,
    plain: <path d="M15 6v12" />,
  };
  return (
    <svg viewBox="0 0 32 32" className="h-[30px] w-[30px] shrink-0" fill="none" stroke="#000">
      <path d="M.5.5h31v31H.5z" />
      {art[kind]}
    </svg>
  );
};

const EDGE_CYAN = 'border-t-[#bffdf5] border-l-[#bffdf5] border-b-[#4c8584] border-r-[#4c8584]';
const EDGE_GRAY = 'border-t-[#f4f4f4] border-l-[#f4f4f4] border-b-[#777] border-r-[#777]';

const TOOLBOX = [
  [CYAN, EDGE_CYAN, ['up', 'down', 'home', 'xy']],
  [CYAN, EDGE_CYAN, ['plain', 'plain', 'screen', 'snake']],
  [CYAN, EDGE_CYAN, ['plain', 'plain', 'screen', 'help']],
  [CYAN, 'border-[#b01818]', ['lights', 'lights', 'lights', 'lights']],
  ['bg-white', 'border-t-white border-l-white border-b-[#999] border-r-[#999]', ['pad', 'pad', 'comb', 'pad']],
  ['bg-[#cfcfcf]', EDGE_GRAY, ['move', 'move', 'move', 'move']],
  ['bg-[#cfcfcf]', EDGE_GRAY, ['mirror', 'mirror', 'plain', 'mirror']],
  ['bg-[#cfcfcf]', EDGE_GRAY, ['copy', 'copy', 'arrow', 'copy']],
  ['bg-[#cfcfcf]', EDGE_GRAY, ['stretch', 'stretch', 'stretch', 'stretch']],
  [GOLD, 'border-t-[#ffe6a8] border-l-[#ffe6a8] border-b-[#9c7320] border-r-[#9c7320]', ['pointer', 'pick', 'pick', 'route']],
];

const RightColumn = () => (
  <section className="flex w-[155px] shrink-0 flex-col overflow-hidden border-l-2 border-[#2f6f60] bg-black">
    <div className="border-t-2 border-b-4 border-[#47807c] bg-black">
      {TOOLBOX.map(([bg, edge, kinds], r) => (
        <div key={r} className={clsx('flex h-10 gap-px', r === 4 && 'mt-1')}>
          {kinds.map((k, i) => (
            <button
              key={i}
              type="button"
              aria-label={`${k} ${r + 1}-${i + 1}`}
              className={clsx('flex h-[39px] w-[39px] shrink-0 items-center justify-center border-[3px]', bg, edge)}
            >
              <ToolIcon kind={k} />
            </button>
          ))}
        </div>
      ))}
    </div>
    <svg viewBox="1765 492 153 430" preserveAspectRatio="xMinYMin slice" className="min-h-0 w-full flex-1">
      <path d="M1765 577h155M1765 835h155" stroke="#3f7d18" />
      <path d="M1815 662h110v78h-110z" fill="#f00" />
      <path d="M1815 674h-16v68h10v-6h11v4h4v-4M1829 736v9h22v-8M1836 737v8" fill="none" stroke="#fff" strokeWidth="1.600" />
      <path d="M1815 674h91" stroke="#bbb" strokeWidth="2" />
      <path d="M1906 674v62h-55M1820 740v-4h-5M1824 740v-4" fill="none" stroke="#22e0e8" strokeWidth="2" />
      <path d="M1806 738l7 7M1813 738l-7 7" stroke="#fff" />
    </svg>
    <div className={clsx(MONO, 'h-[46px] border-y-[3px] border-[#a5f3df] border-b-[#bffdf5] bg-[#54ceb0] pt-[6px] pl-[2px] text-[15px] leading-[15px]')}>
      <p>X = 5.003263&quot;</p>
      <p>Y = 3.160013&quot;</p>
    </div>
  </section>
);

// ---------------------------------------------------------------- bottom bars

const IconFrame = ({ children, size = 20 }) => (
  <svg width={size} height={size} viewBox="0 0 20 20" fill="none" stroke="#000">
    <path d="M.5.5h19v19H.5z" />
    {children}
  </svg>
);

const CommandBar = () => (
  <div className={clsx(MONO, 'flex h-[34px] shrink-0 border-b-2 border-black bg-[#54ceb0] text-xs')}>
    <div className="flex gap-px bg-[#ffffcc]">
      <button type="button" aria-label="Snap" className={clsx(UP_YELLOW, 'm-px flex w-[30px] items-center justify-center')}>
        <IconFrame><path d="M4 4l12 12M4 8V4h4M16 12v4h-4" /></IconFrame>
      </button>
      <button type="button" aria-label="Angle" className={clsx(UP_YELLOW, 'm-px flex w-[30px] items-center justify-center border-l-black')}>
        <IconFrame><path d="M3 16h5L17 4M8 16l-4-4M5 4v5h3M12 13h5M13 11v5M15 11v5" /></IconFrame>
      </button>
    </div>
    <button type="button" aria-label="Grid" className={clsx(UP_GREEN, 'm-px flex w-7 items-center justify-center bg-[#ffffcc]')}>
      <IconFrame size={18}><path d="M3 17V9l6-6h8v14zM9 3v14M3 10h14" /></IconFrame>
    </button>
    <label htmlFor="xy" className="flex w-[48px] items-center border-r border-[#54ceb0] bg-[#ffffcc] pl-[3px]">X Y :</label>
    <span className="flex w-[173px] border border-black bg-[#ffffcc] p-px">
      <span className="flex w-full border-2 border-[#a3a36f] border-r-[#cdcda2] border-b-[#cdcda2] pl-1">
        <Caret />
        <input id="xy" className="w-full min-w-0 bg-transparent outline-none" />
      </span>
    </span>
    <button type="button" aria-label="Abort" className={clsx(UP_GREEN, 'm-px flex w-[30px] items-center justify-center bg-[#ffffcc]')}>
      <IconFrame size={18}><path d="M10 4v8M10 14v3" strokeWidth="2" /></IconFrame>
    </button>
    <p className="flex min-w-0 flex-1 items-center border-l border-black bg-[#ffffcc] pl-[2px]">&lt;M1&gt; - Select first area corner</p>
    <span className="flex w-[73px] border-l-2 border-black py-[2px] pl-[6px]">
      <Drop label="Units" value="Inch" options={['Inch', 'MM']} tone={UP_GREEN} bg="bg-[#54ceb0]" green className="w-[68px] shrink-0" />
    </span>
  </div>
);

const Tile = ({ children, label, bg = 'bg-white/20', stacked }) => (
  <button
    type="button"
    aria-label={label}
    className={clsx('flex h-[39px] w-[58px] items-center justify-center rounded border border-white/40', bg, stacked && 'shadow-[3px_0_0_-1px_#5b7394]')}
  >
    <svg viewBox="0 0 32 32" className="h-8 w-8">{children}</svg>
  </button>
);

const Disc = () => (
  <>
    <circle cx="18" cy="19" r="11" fill="#1aa39a" stroke="#1c3c30" />
    <circle cx="18" cy="19" r="6" fill="#d6e24a" stroke="#0b5f5a" strokeWidth="2" />
    <circle cx="18" cy="19" r="2.500" fill="#0b5f5a" />
    <path d="M2 6c6-6 12-2 13 4-5 3-10 2-13-4z" fill="#2dc0b6" stroke="#164a46" />
    <path d="M8 27l5-4M27 9l-4 5M29 24l-5-2" stroke="#8ef0e6" strokeWidth="2" />
  </>
);

const Taskbar = () => (
  <footer className="flex h-10 shrink-0 items-center border-t border-[#7d97b4] bg-linear-to-r from-[#14305a] via-[#0a2a58] to-[#10253f]">
    <button type="button" aria-label="Start" className="mr-[15px] ml-2">
      <svg width="37" height="37" viewBox="0 0 37 37">
        <circle cx="18.500" cy="18.500" r="18" fill="#1d5c92" stroke="#8fc3e6" />
        <ellipse cx="18" cy="10" rx="14" ry="8" fill="#9ecbe6" opacity=".6" />
        <path d="M9 12c3-2 6-2 9 0l-1 6c-3-2-6-2-9 0z" fill="#e8622a" />
        <path d="M19 12c3 2 6 2 9 0l-1 6c-3 2-6 2-9 0z" fill="#8dc63f" />
        <path d="M8 20c3-2 6-2 9 0l-1 6c-3-2-6-2-9 0z" fill="#3aa0e0" />
        <path d="M18 20c3 2 6 2 9 0l-1 6c-3 2-6 2-9 0z" fill="#fbc93a" />
      </svg>
    </button>
    <div className="flex gap-1">
      <Tile label="Shell" stacked>
        <path d="M16 29C6 26 2 18 3 10l5-6 8-2 8 2 5 6c1 8-3 16-13 19z" fill="#f9dc93" stroke="#a8732a" />
        <path d="M16 29L6 7M16 29L12 3M16 29l4-26M16 29L26 7" stroke="#c99a48" />
        <path d="M20 12l3 6 6 1-4 5 1 6-6-3-6 3 1-6-4-5 6-1z" fill="#f08a2c" stroke="#a34b0c" />
      </Tile>
      <Tile label="Notes">
        <path d="M5 1h22v30H5z" fill="#e6f6ff" />
        <path d="M7 5h18M7 9h18M7 13h18M7 17h18M7 21h18M7 25h18M7 29h18" stroke="#2d8fc6" strokeWidth="2" />
      </Tile>
      <Tile label="Total Commander">
        <path d="M2 1h28v30H4l-2-2z" fill="#2038c8" />
        <path d="M9 1h14v10H9z" fill="#c9cfe0" /><path d="M17 2h4v8h-4z" fill="#2038c8" />
        <path d="M5 15h22v16H5z" fill="#fff" /><path d="M7 19h18M7 23h12" stroke="#c22" />
        <text x="16" y="30" fontSize="8" fontFamily="Liberation Sans, sans-serif" fontWeight="bold">64</text>
      </Tile>
      <Tile label="G-CAM">
        <path d="M27 4L15 5C8 8 4 14 4 21c0 6 5 9 11 9 7 0 11-4 12-13l-10 2v4l4-1c-1 3-3 4-5 4-4 0-6-2-6-6 0-5 4-9 10-10z" fill="#d62a1e" />
      </Tile>
      <Tile label="P">
        <path d="M9 31l3-8H8l3-4H6l3-5H5C6 6 12 1 19 2c8 1 12 8 9 14-2 4-6 6-11 5l-3 10z" fill="#12964f" />
        <path d="M16 8c5-2 8 0 7 4s-4 4-6 4z" fill="#0a5a34" />
      </Tile>
      <Tile label="DingTalk" bg="bg-linear-to-b from-[#f3d079] to-[#dc7d32]">
        <rect x="2" y="1" width="28" height="30" rx="6" fill="#1593f5" />
        <path d="M10 6c7 3 12 6 13 10 0 2-2 5-4 10l-1-4c-3 0-5-2-6-4l3 0c-3-1-4-3-5-6l3 1c-2-2-3-4-3-7z" fill="#fff" />
      </Tile>
      <Tile label="Word" stacked>
        <path d="M12 4h16v25H12z" fill="#fff" stroke="#6d8fc7" /><path d="M14 9h12M14 13h12M14 17h12M14 21h12M14 25h12" stroke="#6d8fc7" strokeWidth="1.500" />
        <path d="M3 4l15-3v28L3 26z" fill="#e9f0fb" stroke="#2b579a" />
        <text x="4" y="20" fontSize="14" fontFamily="Liberation Serif, serif" fontWeight="bold" fill="#1f4690">W</text>
      </Tile>
      <Tile label="Excel" stacked>
        <path d="M12 4h17v25H12z" fill="#fff" stroke="#4f9a58" /><path d="M14 10h14M14 16h14M14 22h14M20 5v24M25 5v24" stroke="#4f9a58" strokeWidth="2" />
        <path d="M3 4l14-3v28L3 26z" fill="#e3f3e4" stroke="#217346" />
        <path d="M6 9l8 12M14 8L6 21" stroke="#1a7a35" strokeWidth="3" />
      </Tile>
      <Tile label="Genesis"><Disc /></Tile>
      <Tile label="X Server" bg="bg-white/50" stacked>
        <path d="M3 3h8l18 26h-8z" fill="#8d2a94" stroke="#fff" /><path d="M27 3h-3L4 29h4z" fill="#5c1866" stroke="#fff" />
      </Tile>
      <Tile label="Genesis 2"><Disc /></Tile>
    </div>
    <div className={clsx(UI, 'ml-auto flex items-center text-white')}>
      <svg width="150" height="28" viewBox="0 0 150 28" fill="none" stroke="#fff">
        <path d="M1 12h15v9H1z" fill="#ddd" stroke="#999" /><path d="M3 15h11M3 18h11" stroke="#666" strokeDasharray="2 1" /><path d="M6 10c0-3 6 0 8-5" />
        <circle cx="31" cy="13" r="7" fill="#2233b8" stroke="#9fb0ff" /><text x="28" y="18" fontSize="12" fontWeight="bold" fill="#fff" stroke="none">?</text>
        <path d="M50 4h5v4h-5zM48 7h4v3h-4z" /><path d="M49 18h6l-3 3z" fill="#fff" />
        <path d="M67 17h7l-3.500-4z" fill="#fff" />
        <path d="M89 8v14M90 9h6v7h-6zM97 11h5v6h-5z" fill="#fff" /><circle cx="98" cy="19" r="4.500" fill="#d33" stroke="#fff" /><path d="M96 17l4 4M100 17l-4 4" />
        <path d="M112 13h3l4-4v14l-4-4h-3z" fill="#fff" /><path d="M121 12c2 2 2 6 0 8M124 10c3 3 3 9 0 12" />
        <path d="M138 10h12v9h-12zM141 22h6M136 8v5M140 6v4M136 8h4" strokeWidth="1.600" />
      </svg>
      <div className="w-[94px] pl-1 text-center text-[13px] leading-[18px]">
        <p>21:09</p>
        <p>2022/9/6</p>
      </div>
      <span className="h-[39px] w-[14px] border border-white/40 bg-white/20" />
    </div>
  </footer>
);

// ---------------------------------------------------------------- dialogs

const YELLOW_IN = 'border-2 border-t-[#a3a36f] border-l-[#a3a36f] border-b-[#cdcda2] border-r-[#cdcda2]';
const WHITE_IN = 'border-2 border-t-[#999] border-l-[#999] border-b-[#ccc] border-r-[#ccc]';
const TD = 'h-[33px] border-2 border-black p-[2px]';

const ToolRow = ({ tool }) => {
  const [id, count, kind, type, finish, drill, letter] = tool;
  const last = id === 'T19';
  return (
    <tr>
      <td className="h-[33px] border-2 border-black bg-[#54ceb0] p-0">
        <svg width="20" height="20" viewBox="0 0 20 20" className="mx-auto block">
          <path d="M.5.5h19v19H.5z" fill="#fff" stroke="#000" />
          <path d="M4 11h11M9.500 5v12" stroke="#000" />
          <text x="13" y="8" fontSize="8" className="font-['Liberation_Sans',sans-serif]">{letter}</text>
        </svg>
      </td>
      <td className={clsx(TD, 'bg-[#54ceb0]')}>
        <button type="button" className={clsx(UP_GREEN, 'block h-[27px] w-full text-left', last ? GOLD : 'bg-[#54ceb0]')}>{id}</button>
      </td>
      <td className={clsx(TD, 'bg-[#54ceb0] text-right')}>{count}</td>
      <td className={clsx(TD, 'bg-white')}>
        <Field label={`${id} slot`} value={kind} tone={WHITE_IN} className="h-[27px]" />
      </td>
      <td className={clsx(TD, 'bg-[#ffffcc] pl-[6px]')}>
        <Drop label={`${id} type`} value={type} options={['Plated', 'NPlated', 'Via']} tone={UP_YELLOW} bg="bg-[#ffffcc]" yellow className="h-[27px]" />
      </td>
      <td className={clsx(TD, 'bg-[#ffffcc]')}>
        <Field label={`${id} finish size`} value={finish} tone={YELLOW_IN} className="h-[27px]" />
      </td>
      <td className={clsx(TD, 'bg-[#ffffcc]')}>
        <Field label={`${id} plus tolerance`} value="0" tone={YELLOW_IN} className="h-[27px]" />
      </td>
      <td className={clsx(TD, 'bg-[#ffffcc]')}>
        <Field label={`${id} minus tolerance`} value="0" tone={YELLOW_IN} className="h-[27px]" />
      </td>
      <td className={clsx(TD, last ? 'bg-black' : 'bg-white')}>
        <Field label={`${id} drill size`} value={drill} tone={clsx(WHITE_IN, 'bg-white')} caret={!last} className="h-[27px]" />
      </td>
      <td className={clsx(TD, 'bg-white')}>
        <Field label={`${id} designator`} value="" tone={WHITE_IN} className="h-[27px]" />
      </td>
    </tr>
  );
};

const COLS = ['w-[26px]', 'w-[68px]', 'w-[60px]', 'w-[83px]', 'w-[115px]', 'w-[83px]', 'w-[75px]', 'w-[74px]', 'w-[83px]', 'w-[82px]'];

const DrillToolManager = () => (
  <section
    aria-label="Drill Tool Manager"
    className="absolute top-[62px] left-[130px] w-[779px] rounded-lg border border-[#c9dde6] bg-linear-to-b from-[#6b8087] via-[#47727c] to-[#0a1420] px-[7px] pb-[5px] shadow-[0_0_8px_#000]"
  >
    <div className={clsx(UI, '-mx-[7px] flex h-[29px] items-start rounded-t-lg bg-linear-to-b from-[#5d9cc4] via-[#39647d] to-[#05080c] pl-[7px] text-[13px]')}>
      <span className="flex h-7 w-[165px] items-center gap-1 rounded-tl-lg bg-linear-to-r from-[#98aab2] via-[#7c929c] to-transparent pb-[2px]">
        <XIcon />
        Drill Tool Manager
      </span>
      <WindowButtons red className="mr-[3px] ml-auto" />
    </div>
    <div className={clsx(MONO, 'flex flex-col border border-black bg-[#54ceb0] text-[15px]')}>
      <div className="flex h-8">
        <div className="flex w-[166px] border-r-2 border-black p-[2px]">
          <button type="button" className={clsx(UP, CYAN, 'flex w-full items-center justify-between pr-[10px] pl-px')}>
            <span>Layer</span>
            <span>:</span>
          </button>
        </div>
        <span className={clsx(CYAN, 'flex w-[109px] border-r border-black p-px')}>
          <Field label="Layer" value="drl" className="flex-1" />
        </span>
        <label className={clsx(CYAN, 'ml-[150px] flex w-[187px] items-center border border-t-0 border-black py-px pr-px pl-[9px] whitespace-pre')}>
          <span className="w-[60px]">Slots:</span>
          <Drop label="Slots" value="By length" options={['By length', 'By count']} className="h-7 flex-1" />
        </label>
      </div>
      <div className="flex h-[30px]">
        <label className={clsx(CYAN, 'flex w-[305px] items-center border border-black whitespace-nowrap')}>
          <span className="w-[166px]">Board Thickness :</span>
          <Field label="Board Thickness" value="62.992" className="h-[25px] w-[105px]" />
          <span className="pl-[3px]">ml</span>
        </label>
        <Key className="w-[177px]">User Parameters :</Key>
        <span className={clsx(CYAN, 'ml-[3px] flex w-[127px] border border-black p-[2px]')}>
          <Field label="User Parameters value" value="no_hasl" className="flex-1" />
        </span>
      </div>

      <div className="mt-[2px] flex">
        <div className="relative flex h-[586px] min-w-0 flex-1 flex-col justify-end overflow-hidden border-t-2 border-r-2 border-b-2 border-l-[3px] border-t-[#2b7561] border-r-[#a5f3df] border-b-[#a5f3df] border-l-[#2b7561]">
          <table className="w-[749px] shrink-0 table-fixed border-collapse">
            <colgroup>
              {COLS.map((c, i) => (
                <col key={i} className={c} />
              ))}
            </colgroup>
            <tbody>
              {TOOLS.map((tool) => (
                <ToolRow key={tool[0]} tool={tool} />
              ))}
              <tr>
                <td className={TD} />
                <td className={TD}>
                  <span className={clsx(UP_GREEN, 'flex h-[27px] items-center')}>Total</span>
                </td>
                <td className={clsx(TD, 'text-right')}>2971</td>
                <td className={TD} /><td className={TD} /><td className={TD} /><td className={TD} /><td className={TD} /><td className={TD} /><td className={TD} />
              </tr>
            </tbody>
          </table>
          <svg viewBox="0 0 380 16" className="absolute bottom-[21px] left-[288px] h-4 w-[380px]" fill="none">
            <path d="M3 14h125l90-2 70-4 90-2" stroke="#1b5a48" strokeWidth="2" opacity=".5" />
            <path d="M1 11h125l80-1 30-3 60-2 79-1" stroke="#ffff00" strokeWidth="4" />
          </svg>
        </div>
        <div className="mr-[2px] ml-1 flex w-[14px] flex-col border-2 border-[#2b7561] border-r-[#a5f3df] border-b-[#a5f3df] bg-[#46b397]">
          <svg width="10" height="11" viewBox="0 0 10 11"><path d="M5 1l4 9H1z" fill="#54ceb0" stroke="#a5f3df" /></svg>
          <span className={clsx(UP_GREEN, 'mt-24 flex-1 bg-[#54ceb0]')} />
          <svg width="10" height="11" viewBox="0 0 10 11"><path d="M1 1h8l-4 9z" fill="#54ceb0" stroke="#a5f3df" /></svg>
        </div>
      </div>

      <div className="mt-[3px] mr-[20px] flex h-[15px] items-center border-2 border-[#2b7561] border-r-[#a5f3df] border-b-[#a5f3df] bg-[#46b397]">
        <svg width="12" height="11" viewBox="0 0 12 11"><path d="M11 1v9L1 5.500z" fill="#54ceb0" stroke="#a5f3df" /></svg>
        <span className={clsx(UP_GREEN, 'mr-[79px] ml-[2px] h-full flex-1 bg-[#54ceb0]')} />
        <svg width="12" height="11" viewBox="0 0 12 11"><path d="M1 1v9l10-4.500z" fill="#54ceb0" stroke="#a5f3df" /></svg>
      </div>

      <div className="mt-[5px] flex h-[34px] items-stretch border-y border-black">
        <span className={clsx(GOLD, 'mr-[2px] flex w-[41px] items-center border border-black pl-[3px] text-xs')}>T19</span>
        <Key className="w-[59px]">First</Key>
        <Key className="w-[35px]">&lt;--</Key>
        <Key className="w-[35px]">--&gt;</Key>
        <Key className="w-[49px]">Last</Key>
        <label htmlFor="tool-index" className="flex w-[60px] items-center pl-[2px]">Index:</label>
        <span className="my-px flex w-[60px] border-2 border-[#2b7561] border-r-[#a5f3df] border-b-[#a5f3df] pl-[3px]">
          <Caret />
          <input id="tool-index" className="w-full min-w-0 bg-transparent outline-none" />
        </span>
        <Key className="ml-[2px] w-[30px]" label="Highlight">
          <IconFrame size={18}><path d="M8 13c0-2-3-3-2-6s7-3 8 0-2 4-2 6zM8 13v3h4v-3" /></IconFrame>
        </Key>
        <Key className="w-[30px]" label="Select">
          <IconFrame size={18}><path d="M4 4h8l4 3-4 3-3-2M16 8v8H4l3-3h3M5 16l3-6" /></IconFrame>
        </Key>
        <Key className="w-[30px]" label="Clear">
          <IconFrame size={18}><path d="M8 14l-2-7 4-3 4 3-2 7M8 14v3h4" /><path d="M3 2l14 16M17 2L3 18" stroke="#d22" strokeWidth="2" /></IconFrame>
        </Key>
        <span className={clsx(CYAN, 'ml-auto flex w-[89px] border-x-2 border-black py-px pl-1')}>
          <Drop label="Units" value="ml/my" options={['ml/my', 'mm/inch']} className="flex-1" />
        </span>
        <span className={clsx(CYAN, 'flex w-[115px] py-px pl-[6px]')}>
          <Drop label="Mode" value="Regular" options={['Regular', 'Precise']} className="flex-1" />
        </span>
      </div>

      <div className="mt-[5px] flex h-[33px] border-y border-black">
        <Key className="ml-auto w-[130px]">Combine Tools</Key>
        <div className={clsx(CYAN, 'flex w-[419px] items-center border-l-2 border-black pl-[10px]')}>
          <span className="w-[134px] whitespace-pre">Merge Tools :</span>
          <Drop label="Merge mode" value="Update Tools Numbers" options={['Update Tools Numbers', 'Keep Tools Numbers']} className="h-7 w-[214px]" />
          <span className="ml-[2px] flex h-full flex-1 bg-[#54ceb0] p-[2px]">
            <button type="button" className={clsx(UP, CYAN, 'flex w-full items-center justify-center')}>Merge</button>
          </span>
        </div>
      </div>

      <div className="grid h-[29px] grid-cols-4">
        <Key>Apply</Key>
        <Key>Calc Drills</Key>
        <Key>Update Table</Key>
        <Key>Close</Key>
      </div>
    </div>
  </section>
);

const POP_ICONS = [
  <path key="a" d="M2 7h9v9H2zM12 3h5v6h-5zM11 12h3V8M4 11h5M6 9l-2 2 2 2" strokeWidth="1.500" />,
  <g key="b"><path d="M7 9H3v8h14V9h-4" strokeWidth="1.800" /><path d="M10 2l5 5h-3v5H8V7H5z" fill="#000" /></g>,
  <g key="c"><path d="M7 11H3V3h14v8h-4" strokeWidth="1.800" /><path d="M10 18l5-5h-3V8H8v5H5z" fill="#000" /></g>,
  <g key="d"><path d="M9 7V3h8v14H9v-4" strokeWidth="1.800" /><path d="M1 10l5-5v3h5v4H6v3z" fill="#000" /></g>,
  <g key="e"><path d="M11 7V3H3v14h8v-4" strokeWidth="1.800" /><path d="M19 10l-5-5v3H9v4h5v3z" fill="#000" /></g>,
  <g key="f"><path d="M7 7h6v6H7z" strokeWidth="1.800" /><path d="M5 1h10l-5 4zM5 19h10l-5-4zM1 5v10l4-5zM19 5v10l-4-5z" fill="#000" /></g>,
  <g key="g"><path d="M8 8h4v4H8z" /><path d="M7 5h6l-3-4zM7 15h6l-3 4zM5 7v6l-4-3zM15 7v6l4-3z" fill="#000" /></g>,
];

const POP_NAMES = ['Dock', 'Pan up', 'Pan down', 'Pan left', 'Pan right', 'Zoom out', 'Zoom in'];

const Popview = ({ title, className, children, frost }) => (
  <section
    aria-label={title}
    className={clsx('absolute flex flex-col rounded-lg border border-[#8d9494] bg-[#161819] px-[5px] pb-1 outline outline-black', className)}
  >
    <div className={clsx(UI, '-mx-[5px] flex h-7 shrink-0 items-start rounded-t-lg bg-linear-to-r text-[13px] text-black', frost || 'from-[#2c2f31] to-[#101214]')}>
      <span className="flex h-[26px] w-[130px] items-center gap-1 rounded-tl-lg bg-linear-to-r from-[#4c4f50] via-[#858a8f] to-transparent pl-[6px]">
        <XIcon />
        {title}
      </span>
      <CloseX className="mr-[5px] ml-auto h-[18px] w-[46px] rounded-b border border-t-0 border-white/50" />
    </div>
    <div className="flex min-h-0 flex-1 flex-col border border-[#8d9494] bg-[#54ceb0]">
      <div className="flex min-h-0 flex-1">
        <div className="flex min-w-0 flex-1 border-4 border-r-2 border-b-[3px] border-t-[#2f6f60] border-l-[#2f6f60] border-r-[#bffdea] border-b-[#bffdea] bg-black">
          {children}
        </div>
        <div className="flex w-[37px] flex-col border-l border-black">
          {POP_ICONS.map((icon, i) => (
            <span key={i} className="flex h-[35px] border-b border-black p-px">
              <button type="button" aria-label={POP_NAMES[i]} className={clsx(UP, CYAN, 'flex flex-1 items-center justify-center')}>
                <svg width="22" height="22" viewBox="-1 -1 22 22" fill="none" stroke="#000">
                  <path d="M-.5-.5h21v21h-21z" />
                  {icon}
                </svg>
              </button>
            </span>
          ))}
        </div>
      </div>
      <Key className="h-[29px] shrink-0">Close</Key>
    </div>
  </section>
);

const PopviewOne = () => (
  <Popview title="Popview - 1" className="top-[106px] left-[1288px] h-[360px] w-[582px]" frost="from-[#2c2f31] via-[#0c0d0e] via-75% to-[#8db4b8]">
    <svg viewBox="1298 139 526 287" preserveAspectRatio="xMidYMid slice" className="h-full w-full">
      <circle cx="1530.500" cy="291" r="148.500" fill="none" stroke={B} strokeWidth="24" />
      <g fill="#00ffff">
        <circle cx="1292" cy="291" r="28" />
        <circle cx="1530.500" cy="291" r="28" />
        <circle cx="1768" cy="291" r="28" />
      </g>
    </svg>
  </Popview>
);

const PopviewTwo = () => (
  <Popview title="Popview - 2" className="top-[554px] left-[1084px] h-[357px] w-[698px]">
    <svg viewBox="1094 587 644 284" preserveAspectRatio="xMidYMid slice" className="h-full w-full font-['DejaVu_Sans_Mono',monospace]">
      <g fill={G}>
        <path d="M1149 580h10v61h99v-6h-5v6h5v-61h9v61h99v-61h11v71h-225l-3-3zM1253 635h19v10h-19z" />
        <path d="M1149 667l3-3h222l3 3v210h-11V674h-99v6h5v0h-5v92h5v33h-5v72h-9v-72h-5v-33h5v-92h-5v-6h-94v203h-10z" />
        <path d="M1253 672h19v8h-19zM1663 580h17v243h60v17h-73l-4-4z" />
      </g>
      <g fill={G} fontSize="71" fontWeight="bold">
        <text transform="translate(1141 851) rotate(-90)">R1</text>
        <text transform="translate(1141 652) rotate(-90)">LE</text>
      </g>
      <ellipse cx="1158" cy="576" rx="29" ry="19" fill={B} />
      <path d="M1149 580h10v15h-10z" fill={L} />
      <g fill={B} stroke={B} strokeWidth="2" fontSize="103" className="mix-blend-plus-lighter">
        <text transform="matrix(0 -1 -1 0 1279 920)">TP1O2</text>
        <text transform="matrix(0 -1 -1 0 1583 902)">R292</text>
      </g>
      <circle cx="1420" cy="736" r="54" />
      <circle cx="1420" cy="736" r="64" fill="none" stroke={L} strokeWidth="9.500" />
      <path d="M1363.500 706a64 64 0 0 0 0 60" fill="none" stroke={B} strokeWidth="9.500" />
      <g fill="#00ffff">
        {[632, 736, 841].map((y) => (
          <g key={y}>
            <circle cx="1420" cy={y} r="12" />
            <circle cx="1525" cy={y} r="12" />
          </g>
        ))}
      </g>
      <circle cx="1630" cy="841" r="10" fill="#f00" />
    </svg>
  </Popview>
);

export default function App() {
  return (
    <div className="relative flex h-screen flex-col overflow-hidden bg-[#a9bcc6] text-black">
      <div className={clsx(UI, 'flex h-[22px] shrink-0 items-start bg-linear-to-r from-[#a9b8be] via-[#3c6aa8] to-[#1f4178] pl-2 text-[13px]')}>
        <span className="flex items-center gap-[5px] leading-[15px] whitespace-nowrap">
          <XIcon />
          Graphic Editor 9.07b2 (00@HY-HYCAM-PC411 - Windows, pid:6532)
        </span>
        <WindowButtons className="-mt-2 -mr-3 ml-auto" />
      </div>
      <div className="flex min-h-0 flex-1 flex-col bg-linear-to-r from-[#3d6470] to-[#a9bcc6] pl-2">
        <Header />
        <main className="flex min-h-0 flex-1">
          <Sidebar />
          <BoardCanvas />
          <RightColumn />
        </main>
        <CommandBar />
        <div className={clsx(MONO, 'flex h-[30px] shrink-0 items-center justify-center border-2 border-r-0 border-[#47807c] border-b-black bg-[#b3ffff] text-xs')}>
          28 r13.78 Pads were selected
        </div>
      </div>
      <div className="h-[9px] shrink-0 border-b border-[#333] bg-linear-to-b from-[#e4eef2] to-[#a9bcc6]" />
      <Taskbar />
      <DrillToolManager />
      <PopviewTwo />
      <PopviewOne />
    </div>
  );
}
